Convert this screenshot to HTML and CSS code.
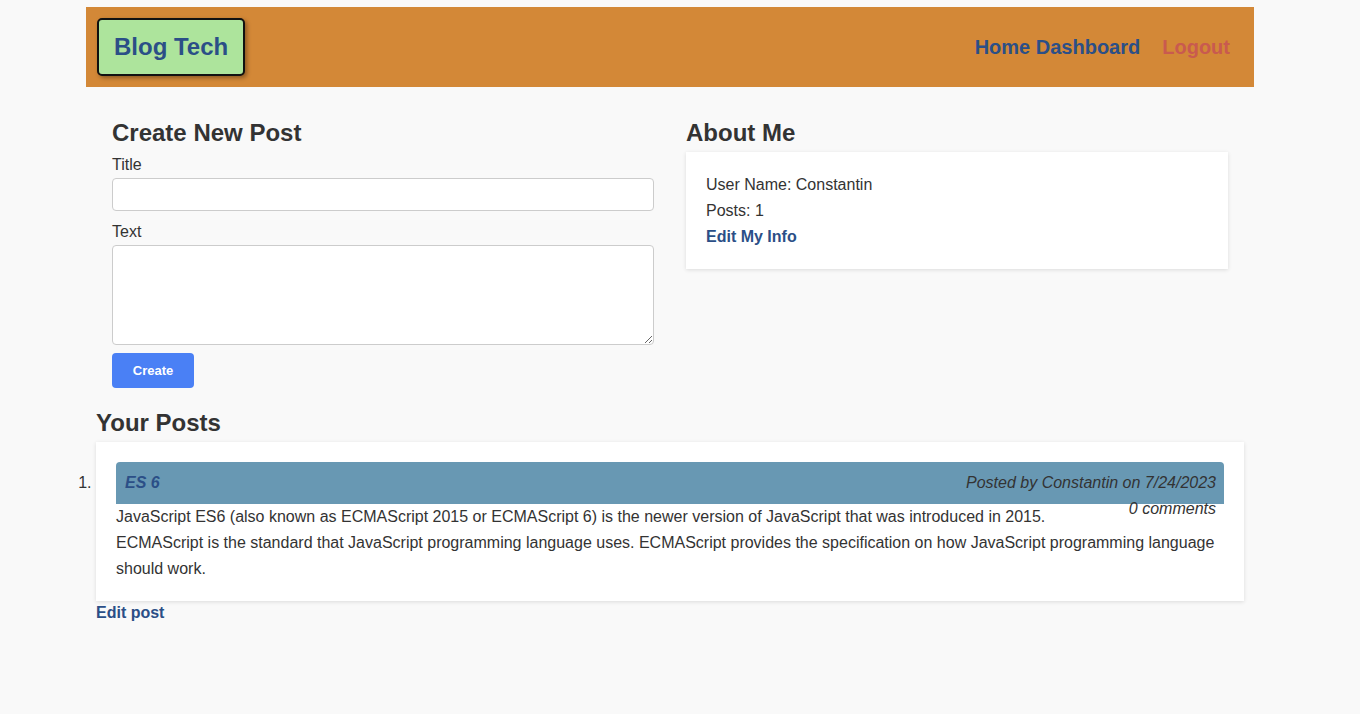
FILE: index.html
```html
<!DOCTYPE html>
<html lang="en">
<head>
<meta charset="utf-8">
<title>Blog Tech</title>
<link rel="stylesheet" href="styles.css">
</head>
<body>
<div class="wrapper">
  <header class="site-header">
    <a class="logo" href="#">Blog Tech</a>
    <nav class="nav">
      <a class="nav-link" href="#">Home Dashboard</a>
      <a class="nav-link logout" href="#">Logout</a>
    </nav>
  </header>

  <main class="content">
    <div class="columns">
      <section class="col">
        <h2 class="heading">Create New Post</h2>
        <form class="post-form">
          <label class="label" for="title">Title</label>
          <input class="input" id="title" type="text">
          <label class="label label-text" for="text">Text</label>
          <textarea class="textarea" id="text"></textarea>
          <button class="btn" type="button">Create</button>
        </form>
      </section>
      <section class="col">
        <h2 class="heading">About Me</h2>
        <div class="about-card">
          <div class="about-line">User Name: Constantin</div>
          <div class="about-line">Posts: 1</div>
          <a class="about-link" href="#">Edit My Info</a>
        </div>
      </section>
    </div>

    <section class="posts">
      <h2 class="heading">Your Posts</h2>
      <ol class="post-list">
        <li class="post-card">
          <div class="post-bar">
            <span class="post-title">ES 6</span>
            <div class="post-meta">
              <div>Posted by Constantin on 7/24/2023</div>
              <div>0 comments</div>
            </div>
          </div>
          <div class="post-body">JavaScript ES6 (also known as ECMAScript 2015 or ECMAScript 6) is the newer version of JavaScript that was introduced in 2015.<br>ECMAScript is the standard that JavaScript programming language uses. ECMAScript provides the specification on how JavaScript programming language should work.</div>
        </li>
      </ol>
      <a class="edit-post" href="#">Edit post</a>
    </section>
  </main>
</div>
</body>
</html>
```

FILE: styles.css
```css
* {
  box-sizing: border-box;
}

html, body {
  margin: 0;
  padding: 0;
}

body {
  background: #f9f9f9;
  color: #333333;
  font-family: "Liberation Sans", Arial, Helvetica, sans-serif;
  font-size: 16px;
}

a {
  text-decoration: none;
}

.wrapper {
  width: 1168px;
  margin: 7px 0 0 86px;
}

.site-header {
  height: 80px;
  background: #d38837;
  display: flex;
  align-items: center;
  justify-content: space-between;
  padding: 0 24px 0 10px;
}

.logo {
  display: block;
  margin-top: -1px;
  margin-left: 1px;
  background: #ade49c;
  border: 2px solid #111111;
  border-radius: 5px;
  box-shadow: 2px 2px 4px rgba(0, 0, 0, 0.35);
  color: #2b4f87;
  font-weight: bold;
  font-size: 24px;
  line-height: 54px;
  padding: 0 15px 0 15px;
}

.nav {
  display: flex;
  gap: 22px;
}

.nav-link {
  color: #2b4f87;
  font-weight: bold;
  font-size: 20px;
}

.nav-link.logout {
  color: #c95a4f;
}

.content {
  padding: 31px 10px 0;
}

.columns {
  display: grid;
  grid-template-columns: 1fr 1fr;
}

.col {
  padding: 0 16px;
}

.heading {
  margin: 0;
  font-size: 24px;
  line-height: 29px;
  font-weight: bold;
  color: #333333;
}

.post-form {
  display: flex;
  flex-direction: column;
  align-items: flex-start;
}

.label {
  display: block;
  line-height: 24px;
  margin-top: 6px;
}

.label-text {
  margin-top: 9px;
}

.input {
  width: 100%;
  height: 33px;
  margin-top: 1px;
  border: 1px solid #cccccc;
  border-radius: 4px;
  background: #ffffff;
  font-family: inherit;
  font-size: 16px;
}

.textarea {
  width: 100%;
  height: 100px;
  margin-top: 1px;
  border: 1px solid #cccccc;
  border-radius: 4px;
  background: #ffffff;
  font-family: inherit;
  font-size: 16px;
  resize: vertical;
}

.btn {
  margin-top: 8px;
  width: 82px;
  height: 35px;
  border: none;
  border-radius: 4px;
  background: #4a80f5;
  color: #ffffff;
  font-family: inherit;
  font-weight: bold;
  font-size: 13px;
}

.about-card {
  margin-top: 5px;
  background: #ffffff;
  box-shadow: 0 1px 4px rgba(0, 0, 0, 0.12);
  padding: 20px 20px 19px;
}

.about-line {
  line-height: 26px;
}

.about-link {
  display: block;
  line-height: 26px;
  color: #2b4f87;
  font-weight: bold;
}

.posts {
  margin-top: 20px;
}

.post-list {
  margin: 5px 0 0;
  padding: 0;
}

.post-card {
  background: #ffffff;
  box-shadow: 0 1px 4px rgba(0, 0, 0, 0.12);
  padding: 20px 20px 19px;
}

.post-bar {
  height: 42px;
  background: #6898b3;
  border-radius: 4px 4px 0 0;
  display: flex;
  justify-content: space-between;
  align-items: flex-start;
  padding: 8px 8px 0 9px;
  line-height: 26px;
}

.post-title {
  color: #2b4f87;
  font-weight: bold;
  font-style: italic;
}

.post-meta {
  text-align: right;
  font-style: italic;
  color: #333333;
}

.post-body {
  line-height: 26px;
}

.edit-post {
  display: inline-block;
  line-height: 24px;
  color: #2b4f87;
  font-weight: bold;
}
```
